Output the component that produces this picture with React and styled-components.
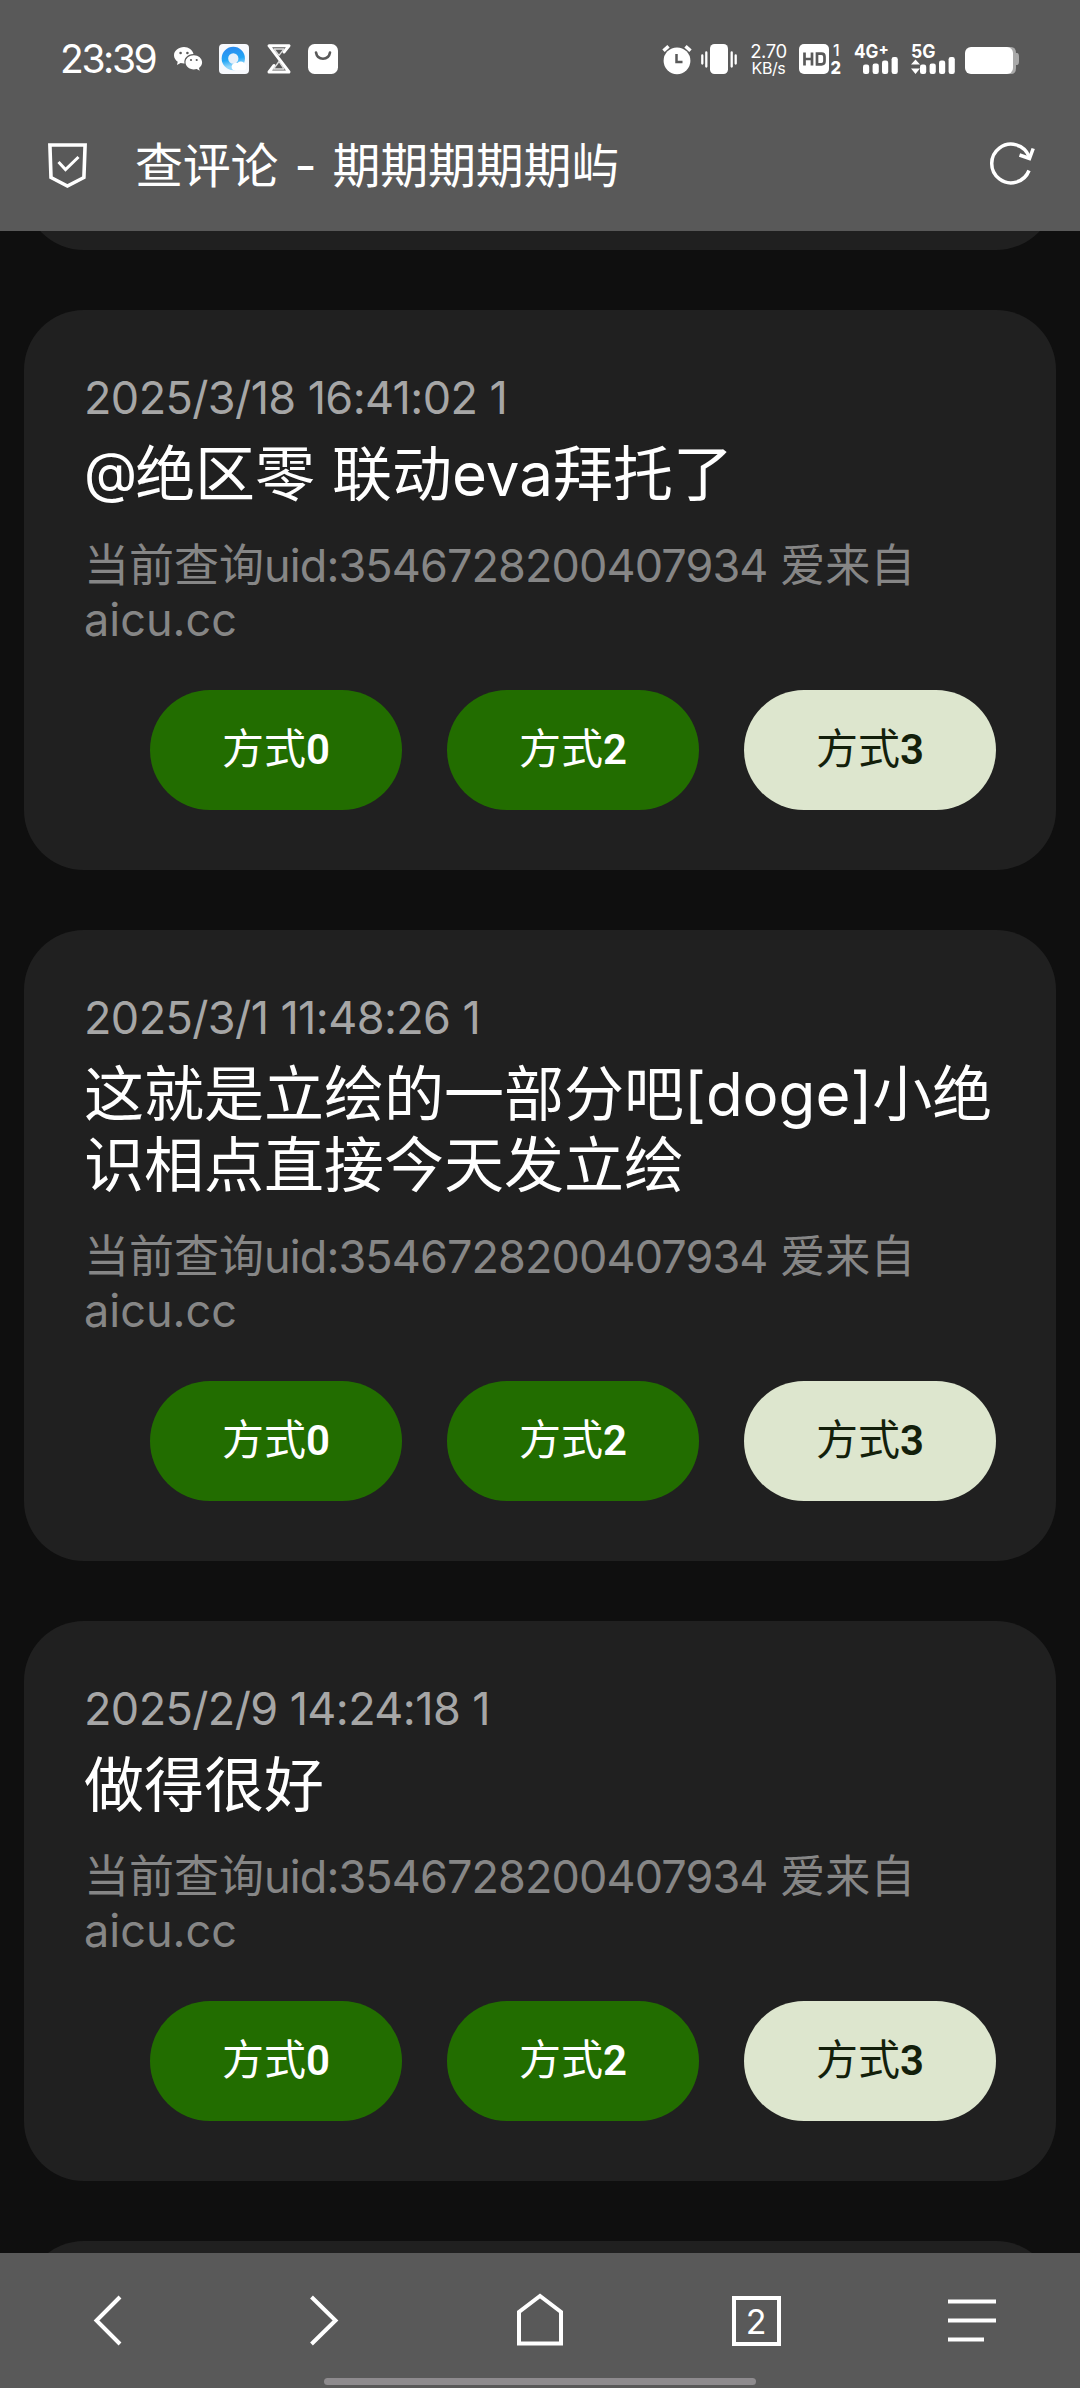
import React from 'react'
import styled, { createGlobalStyle } from 'styled-components'

const GlobalStyle = createGlobalStyle`
  * {
    box-sizing: border-box;
  }

  body {
    margin: 0;
    background: #0f0f0f;
    font-family: Inter, "Noto Sans CJK SC", sans-serif;
  }
`

const Screen = styled.div`
  display: flex;
  flex-direction: column;
  width: 1080px;
  height: 2388px;
  overflow: hidden;
  background: #0f0f0f;
`

const Header = styled.header`
  flex: none;
  height: 231px;
  background: #595959;
  color: #fff;
`

const StatusBar = styled.div`
  display: flex;
  align-items: flex-start;
  height: 118px;
  padding: 44px 61px 0 60px;
`

const Clock = styled.span`
  width: 97px;
  font-size: 39px;
  line-height: 30px;
  letter-spacing: -2.4px;
  white-space: nowrap;
`

const StatusIcon = styled.svg`
  display: block;
  flex: none;
  overflow: visible;
  margin-left: ${props => props.$gap}px;
`

const Spacer = styled.div`
  flex: 1;
`

const NetSpeed = styled.div`
  width: 37px;
  margin-left: 13px;
  text-align: center;
  white-space: nowrap;
`

const SpeedValue = styled.div`
  font-size: 18.5px;
  line-height: 15px;
  letter-spacing: -0.4px;
`

const SpeedUnit = styled.div`
  font-size: 16px;
  line-height: 18px;
  letter-spacing: -0.4px;
`

const TitleBar = styled.div`
  display: flex;
  align-items: center;
  height: 92px;
  padding: 0 44px 0 45px;
`

const PageTitle = styled.h1`
  flex: 1;
  margin: 0 0 0 46px;
  padding-top: 3px;
  font-size: 48px;
  font-weight: 400;
  line-height: 60px;
  letter-spacing: -0.2px;
  white-space: pre;
`

const Dash = styled.span`
  display: inline-block;
  width: 54px;
  text-align: center;
`

const Feed = styled.main`
  flex: 1;
  min-height: 0;
  overflow: hidden;
  display: flex;
  flex-direction: column;
  gap: 60px;
  padding: 0 24px;
`

const Card = styled.article`
  flex: none;
  padding: 61px 60px 60px;
  border-radius: 60px;
  background: #202020;
`

// neighbours that are scrolled mostly out of view
const PastCard = styled(Card)`
  height: 200px;
  margin-top: -181px;
`

const NextCard = styled(Card)`
  height: 200px;
`

const Time = styled.div`
  height: 54px;
  font-size: 45px;
  line-height: 54px;
  letter-spacing: -0.6px;
  white-space: nowrap;
  color: #a6a6a6;
`

const Message = styled.h2`
  margin: 14px -10px 0 0;
  font-size: 60px;
  font-weight: 400;
  line-height: 71px;
  color: #fff;
`

const At = styled.span`
  font-size: 55px;
  line-height: 1;
  letter-spacing: -2px;
  vertical-align: 4px;
`

const Source = styled.p`
  height: 108px;
  margin: 29px 0 43px;
  font-size: 45px;
  line-height: 54px;
  color: #868686;
`

const Uid = styled.span`
  letter-spacing: -0.9px;
`

const Actions = styled.div`
  display: flex;
  justify-content: flex-end;
  gap: 45px;
`

const Button = styled.button`
  width: 252px;
  height: 120px;
  padding: 0 0 9px;
  border: 0;
  border-radius: 60px;
  background: ${props => (props.$tonal ? '#dde6ce' : '#226d00')};
  color: ${props => (props.$tonal ? '#131f0b' : '#fff')};
  font-family: Roboto, "Noto Sans CJK SC", sans-serif;
  font-size: 42px;
`

const Digit = styled.span`
  font-weight: 600;
`

const BottomBar = styled.nav`
  position: relative;
  flex: none;
  display: grid;
  grid-template-columns: repeat(5, 1fr);
  justify-items: center;
  height: 135px;
  padding-top: 38px;
  background: #595959;
`

const NavIcon = styled.svg`
  display: block;
  fill: none;
  stroke: #fff;
  stroke-width: 4;
`

const TabCount = styled.div`
  display: flex;
  align-items: center;
  justify-content: center;
  width: 49px;
  height: 50px;
  margin-top: 5px;
  padding-top: 2px;
  border: 4px solid #fff;
  color: #fff;
  font-size: 34px;
  line-height: 40px;
`

const HomeHandle = styled.div`
  position: absolute;
  left: 324px;
  bottom: 3px;
  width: 432px;
  height: 7px;
  border-radius: 4px;
  background: #8e8b8e;
`

const comments = [
  { time: '2025/3/18 16:41:02 1', mention: true, message: '绝区零 联动eva拜托了' },
  { time: '2025/3/1 11:48:26 1', message: '这就是立绘的一部分吧[doge]小绝识相点直接今天发立绘' },
  { time: '2025/2/9 14:24:18 1', message: '做得很好' },
]

const WeChatIcon = () => (
  <StatusIcon $gap={17} width="28" height="30" viewBox="0 0 28 30">
    <path fill="#fff" d="M10 3C4.500 3 0 6.700 0 11.300c0 2.600 1.400 4.900 3.700 6.400L3 21l3.600-1.900c1.100.3 2.200.5 3.400.5h.6c-1.300-5 3-9.600 8.900-9.600C18.600 6 14.700 3 10 3z" />
    <path fill="#fff" d="M19.800 11.200c-4.700 0-8.300 3.200-8.300 7.100s3.600 7.100 8.300 7.100c1 0 2-.2 2.900-.5l3 1.800-.7-2.800c1.900-1.300 3.100-3.300 3.100-5.600 0-3.900-3.700-7.100-8.300-7.100z" />
    <g fill="#595959">
      <circle cx="6.600" cy="9" r="1.300" />
      <circle cx="13.400" cy="9" r="1.300" />
      <circle cx="17" cy="16" r="1.100" />
      <circle cx="22.700" cy="16" r="1.100" />
    </g>
  </StatusIcon>
)

const BrowserIcon = () => (
  <StatusIcon $gap={17} width="30" height="30" viewBox="0 0 30 30">
    <defs>
      <linearGradient id="ring" x1="0" y1="0" x2="0.200" y2="1">
        <stop offset="0" stopColor="#2a8ef0" />
        <stop offset="0.600" stopColor="#22a5f5" />
        <stop offset="1" stopColor="#8fd6fb" />
      </linearGradient>
    </defs>
    <rect width="30" height="30" rx="4" fill="#f7f9fd" />
    <circle cx="14.300" cy="14.500" r="8.400" fill="#e6f0fa" stroke="url(#ring)" strokeWidth="6.500" />
    <path fill="#fff" d="M14 26a4 4 0 0 1 .5-6.500 4 4 0 0 1 4-.5 4.500 4.500 0 0 1 7 .500 4 4 0 0 1 .500 6.500z" />
  </StatusIcon>
)

const HourglassIcon = () => (
  <StatusIcon $gap={18} width="24" height="30" viewBox="0 0 24 30" fill="none" stroke="#fff" strokeLinecap="round" strokeLinejoin="round">
    <path strokeWidth="3" d="M17 8l5-6.300H2l20 26.300H2l5-6.500" />
    <path strokeWidth="1.300" stroke="#ddd" d="M7 5h10l-5 6.300zM12 17.500L6.500 25H17z" />
  </StatusIcon>
)

const BagIcon = () => (
  <StatusIcon $gap={17} width="30" height="30" viewBox="0 0 30 30">
    <rect width="30" height="30" rx="6.500" fill="#fff" />
    <path d="M8 8.500c1.500 8.300 12.500 8.300 14 0" fill="none" stroke="#595959" strokeWidth="2.600" strokeLinecap="round" />
  </StatusIcon>
)

const AlarmIcon = () => (
  <StatusIcon $gap={0} width="30" height="30" viewBox="0 0 30 30">
    <circle cx="15" cy="16.800" r="13.400" fill="#fff" />
    <path d="M1.500 6.800L6.500 2.300M28.500 6.800L23.500 2.300" stroke="#fff" strokeWidth="3.500" />
    <path d="M14.500 10v8h6" fill="none" stroke="#595959" strokeWidth="2.500" />
  </StatusIcon>
)

const VibrateIcon = () => (
  <StatusIcon $gap={9} width="36" height="30" viewBox="0 0 36 30">
    <rect x="9" width="18" height="30" rx="4.500" fill="#fff" />
    <path d="M1.300 11.500v8M5.300 8.500v14M30.700 8.500v14M34.700 11.500v8" stroke="#fff" strokeWidth="2.300" strokeLinecap="round" />
  </StatusIcon>
)

const HdIcon = () => (
  <StatusIcon $gap={12} width="43" height="30" viewBox="0 0 43 30">
    <rect width="30" height="30" rx="5" fill="#fff" />
    <path d="M5.500 8.500v13M13 8.500v13M5.500 15H13" stroke="#595959" strokeWidth="2.700" fill="none" />
    <path d="M18 9.700h4.500q3 0 3 3v4.600q0 3-3 3H18z" stroke="#595959" strokeWidth="2.700" fill="none" />
    <text x="34" y="12" fill="#fff" fontSize="16" fontWeight="500">1</text>
    <text x="31.500" y="30" fill="#fff" fontSize="18" fontWeight="800" textLength="10.500" lengthAdjust="spacingAndGlyphs">2</text>
  </StatusIcon>
)

const bars = [
  { x: 0, h: 9.500 },
  { x: 9.600, h: 10.500 },
  { x: 19, h: 13.500 },
  { x: 28.600, h: 17 },
]

const Signal = ({ label, gap, plus, data }) => (
  <StatusIcon $gap={gap} width="45" height="30" viewBox="0 0 45 30" fill="#fff">
    <text x="0" y="14" fontSize="18.500" fontWeight="700" textLength="24.500" lengthAdjust="spacingAndGlyphs">{label}</text>
    {plus && <text x="24.500" y="10.500" fontSize="15" fontWeight="800">+</text>}
    {bars.map(bar => (
      <rect key={bar.x} x={bar.x + 9} y={30 - bar.h} width="6.200" height={bar.h} rx="2.200" />
    ))}
    {data && <path d="M0 20.500L4.500 15.500 9 20.500zM0 24.500h9L4.500 30z" />}
  </StatusIcon>
)

const BatteryIcon = () => (
  <StatusIcon $gap={9} width="54" height="30" viewBox="0 0 54 30">
    <path d="M42 3h4q5 0 5 6h1q2 0 2 4v4q0 4-2 4h-1v3q0 6-5 6h-4z" fill="#a9a9a9" />
    <rect y="3" width="48" height="27" rx="6" fill="#fff" />
  </StatusIcon>
)

const ShieldIcon = () => (
  <svg width="44" height="50" viewBox="0 0 44 50" fill="none" stroke="#fff">
    <path strokeWidth="3.600" d="M4.900 6L6 38.500 22.400 47 38.900 38.500 40.100 6z" />
    <path strokeWidth="3" d="M13.500 23l7 7.500L33.500 18" />
  </svg>
)

const ReloadIcon = () => (
  <svg width="50" height="50" viewBox="0 0 50 50" fill="none" stroke="#fff" strokeWidth="3.500">
    <path d="M43 31.500A19.300 19.300 0 1 1 43 17.500" />
    <path d="M33.500 16l10 3.500L47.200 9.500" />
  </svg>
)

const CommentCard = ({ time, mention, message }) => (
  <Card>
    <Time>{time}</Time>
    <Message>
      {mention && <At>@</At>}
      {message}
    </Message>
    <Source>
      当前查询<Uid>uid:3546728200407934</Uid> 爱来自 aicu.cc
    </Source>
    <Actions>
      <Button>方式<Digit>0</Digit></Button>
      <Button>方式<Digit>2</Digit></Button>
      <Button $tonal>方式<Digit>3</Digit></Button>
    </Actions>
  </Card>
)

export default function App() {
  return (
    <Screen>
      <GlobalStyle />
      <Header>
        <StatusBar>
          <Clock>23:39</Clock>
          <WeChatIcon />
          <BrowserIcon />
          <HourglassIcon />
          <BagIcon />
          <Spacer />
          <AlarmIcon />
          <VibrateIcon />
          <NetSpeed>
            <SpeedValue>2.70</SpeedValue>
            <SpeedUnit>KB/s</SpeedUnit>
          </NetSpeed>
          <HdIcon />
          <Signal label="4G" gap={12} plus />
          <Signal label="5G" gap={12} data />
          <BatteryIcon />
        </StatusBar>
        <TitleBar>
          <ShieldIcon />
          <PageTitle>查评论<Dash>-</Dash>期期期期期屿</PageTitle>
          <ReloadIcon />
        </TitleBar>
      </Header>
      <Feed>
        <PastCard />
        {comments.map(comment => (
          <CommentCard key={comment.time} {...comment} />
        ))}
        <NextCard />
      </Feed>
      <BottomBar>
        <NavIcon width="60" height="60" viewBox="0 0 60 60">
          <path d="M42 6L18.500 29.500 42 53" />
        </NavIcon>
        <NavIcon width="60" height="60" viewBox="0 0 60 60">
          <path d="M17.500 6L41.500 29.500 17.500 53" />
        </NavIcon>
        <NavIcon width="60" height="60" viewBox="0 0 60 60">
          <path d="M9 52.500V21L30 5 51 21v31.500z" />
        </NavIcon>
        <TabCount>2</TabCount>
        <NavIcon width="60" height="60" viewBox="0 0 60 60">
          <path d="M6 10.500h48M6 29.500h48M6 48.500h36" />
        </NavIcon>
        <HomeHandle />
      </BottomBar>
    </Screen>
  )
}
